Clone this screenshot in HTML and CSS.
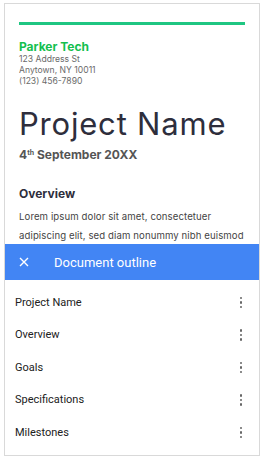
FILE: index.html
```html
<!DOCTYPE html>
<html>
<head>
<meta charset="utf-8">
<link rel="stylesheet" href="styles.css">
</head>
<body>
<div class="frame">
  <div class="doc">
    <div class="rule"></div>
    <div class="company">Parker Tech</div>
    <div class="address">123 Address St<br>Anytown, NY 10011<br>(123) 456-7890</div>
    <h1 class="title">Project Name</h1>
    <div class="date">4<sup>th</sup> September 20XX</div>
    <h2 class="heading">Overview</h2>
    <p class="body">Lorem ipsum dolor sit amet, consectetuer<br>adipiscing elit, sed diam nonummy nibh euismod</p>
  </div>
  <div class="sheet">
    <div class="sheet-header">
      <svg class="close" width="10" height="10" viewBox="0 0 10 10"><path d="M1 1 L9 9 M9 1 L1 9" stroke="#fff" stroke-width="1.4" fill="none"/></svg>
      <span class="sheet-title">Document outline</span>
    </div>
    <ul class="outline">
      <li class="item"><span>Project Name</span><span class="more"><i></i><i></i><i></i></span></li>
      <li class="item"><span>Overview</span><span class="more"><i></i><i></i><i></i></span></li>
      <li class="item"><span>Goals</span><span class="more"><i></i><i></i><i></i></span></li>
      <li class="item"><span>Specifications</span><span class="more"><i></i><i></i><i></i></span></li>
      <li class="item"><span>Milestones</span><span class="more"><i></i><i></i><i></i></span></li>
    </ul>
  </div>
</div>
</body>
</html>
```
FILE: styles.css
```css
html, body { margin: 0; padding: 0; background: #fff; }
body { font-family: "Inter", "Lato", sans-serif; }
.frame {
  margin: 3px 0 0 4px;
  width: 256px;
  height: 453px;
  border: 1px solid #d9d9d9;
  box-sizing: border-box;
  display: flex;
  flex-direction: column;
  overflow: hidden;
}
.doc {
  height: 240px;
  overflow: hidden;
  padding: 0 14px;
  flex: none;
}
.rule {
  margin-top: 18px;
  height: 3px;
  background: #1fc682;
}
.company {
  margin-top: 14px;
  font-size: 12px;
  font-weight: 700;
  color: #14bf4f;
  line-height: 15px;
}
.address {
  font-size: 8.6px;
  line-height: 11px;
  color: #6a6a6a;
}
.title {
  margin: 19px 0 0;
  font-size: 31px;
  font-weight: 400;
  color: #2e2e3c;
  line-height: 36px;
  letter-spacing: 0.8px;
}
.date {
  margin-top: 6px;
  font-size: 12px;
  font-weight: 700;
  color: #555;
  line-height: 14px;
}
.date sup { font-size: 7px; line-height: 0; vertical-align: 4px; }
.heading {
  margin: 24px 0 0;
  font-size: 12px;
  font-weight: 700;
  color: #2e2e3c;
  line-height: 16px;
}
.body {
  margin: 5px 0 0;
  font-size: 9.6px;
  line-height: 19px;
  color: #444;
  white-space: nowrap;
  letter-spacing: 0.1px;
}
.sheet { flex: 1; display: flex; flex-direction: column; font-family: "Roboto", sans-serif; }
.sheet-header {
  height: 36px;
  background: #4285f4;
  display: flex;
  align-items: center;
  padding-left: 14px;
  gap: 25px;
  flex: none;
}
.close { display: block; }
.sheet-title { color: #fff; font-size: 13px; }
.outline { list-style: none; margin: 0; padding: 6px 0 0; }
.item {
  height: 32.5px;
  display: flex;
  align-items: center;
  justify-content: space-between;
  padding: 0 17px 0 10px;
  font-size: 11px;
  color: #212121;
}
.more { display: flex; flex-direction: column; gap: 2px; }
.more i { display: block; width: 2.5px; height: 2.5px; background: #666; border-radius: 1px; }
```
